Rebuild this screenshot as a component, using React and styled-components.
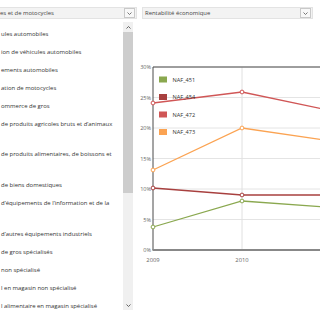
import React from 'react';
import styled, { createGlobalStyle } from 'styled-components';

const GlobalStyle = createGlobalStyle`
  html, body {
    margin: 0;
    padding: 0;
    background: #fff;
  }
  body {
    font-family: "Open Sans", "Liberation Sans", sans-serif;
    color: #333;
  }
`;

const Page = styled.div`
  width: 320px;
  height: 320px;
  overflow: hidden;
  display: flex;
  flex-direction: column;
`;

const Toolbar = styled.div`
  height: 22px;
  box-sizing: border-box;
  padding-top: 7px;
  display: flex;
  align-items: flex-start;
  gap: 5px;
`;

const Select = styled.div`
  width: ${p => p.$width}px;
  height: 12px;
  box-sizing: border-box;
  display: flex;
  align-items: center;
  background: #f3f3f3;
  border: 1px solid #e3e3e3;
  border-left: ${p => (p.$cut ? 'none' : '1px solid #e3e3e3')};
  padding-left: ${p => (p.$cut ? 0 : 2)}px;
  font-size: 5.9px;
  color: #444;
  white-space: nowrap;
`;

const SelectButton = styled.div`
  margin-left: auto;
  margin-right: 1px;
  width: 11px;
  height: 10px;
  box-sizing: border-box;
  border: 1px solid #c9c9c9;
  background: #f8f8f8;
  display: flex;
  align-items: center;
  justify-content: center;
`;

const Body = styled.div`
  height: 288px;
  display: flex;
`;

const ListPanel = styled.div`
  width: 133px;
  display: flex;
  background: #fff;
`;

const List = styled.div`
  flex: 1;
  overflow: hidden;
  padding-top: 3.5px;
`;

const Item = styled.div`
  padding: 2.6px 0 2.6px 1px;
  line-height: 12.75px;
  height: ${p => p.$lines * 12.75}px;
  font-size: 5.95px;
  color: #333;
  white-space: nowrap;
`;

const Scrollbar = styled.div`
  width: 10px;
  background: #f0f0f0;
  display: flex;
  flex-direction: column;
`;

const Arrow = styled.div`
  height: 10px;
  display: flex;
  align-items: center;
  justify-content: center;
`;

const Track = styled.div`
  flex: 1;
`;

const Thumb = styled.div`
  height: 161px;
  background: #cdcdcd;
`;

const ChartPanel = styled.div`
  flex: 1;
  margin-left: 3px;
  background: #fff;
`;

const Chevron = ({ up, color = '#666' }) => (
  <svg width="5" height="3" viewBox="0 0 5 3">
    <polyline
      points={up ? '0.5,2.5 2.5,0.5 4.5,2.5' : '0.5,0.5 2.5,2.5 4.5,0.5'}
      fill="none"
      stroke={color}
      strokeWidth="0.9"
    />
  </svg>
);

const items = [
  { text: 'ules automobiles', lines: 1 },
  { text: 'ion de véhicules automobiles', lines: 1 },
  { text: 'ements automobiles', lines: 1 },
  { text: 'ation de motocycles', lines: 1 },
  { text: 'ommerce de gros', lines: 1 },
  { text: 'de produits agricoles bruts et d\u2019animaux', lines: 2 },
  { text: 'de produits alimentaires, de boissons et', lines: 2 },
  { text: 'de biens domestiques', lines: 1 },
  { text: 'd\u2019équipements de l\u2019information et de la', lines: 2 },
  { text: 'd\u2019autres équipements industriels', lines: 1 },
  { text: 'de gros spécialisés', lines: 1 },
  { text: 'non spécialisé', lines: 1 },
  { text: 'l en magasin non spécialisé', lines: 1 },
  { text: 'l alimentaire en magasin spécialisé', lines: 1 },
];

// chart geometry in page coordinates
const TOP = 67;
const BOTTOM = 250;
const LEFT = 153;
const STEP = 89;
const yOf = v => BOTTOM - (v / 30) * (BOTTOM - TOP);

const series = [
  { name: 'NAF_451', color: '#8aa84f', ys: [227, 201, 207.5] },
  { name: 'NAF_454', color: '#a8403f', ys: [188, 195, 195] },
  { name: 'NAF_472', color: '#d05656', ys: [103, 92, 110.6] },
  { name: 'NAF_473', color: '#fba352', ys: [170, 128, 141] },
];

const Chart = () => {
  const ticks = [0, 5, 10, 15, 20, 25, 30];
  return (
    <svg width="184" height="288" viewBox="136 22 184 288" style={{ display: 'block' }}>
      {ticks.map(t => (
        <line key={t} x1={LEFT} x2={340} y1={yOf(t)} y2={yOf(t)} stroke="#e4e4e4" strokeWidth="1" />
      ))}
      <line x1={LEFT + STEP} x2={LEFT + STEP} y1={TOP} y2={BOTTOM} stroke="#e0e0e0" strokeWidth="1" />
      {ticks.map(t => (
        <text
          key={t}
          x={151}
          y={yOf(t) + 2}
          textAnchor="end"
          fontSize="5.5"
          fill="#666"
          fontFamily="Open Sans, Liberation Sans, sans-serif"
        >
          {t}%
        </text>
      ))}
      {['2009', '2010'].map((yr, i) => (
        <text
          key={yr}
          x={LEFT + i * STEP}
          y={262}
          textAnchor="middle"
          fontSize="5.8"
          fill="#666"
          fontFamily="Open Sans, Liberation Sans, sans-serif"
        >
          {yr}
        </text>
      ))}
      {series.map(s => (
        <polyline
          key={s.name}
          points={s.ys.map((y, i) => `${LEFT + i * STEP},${y}`).join(' ')}
          fill="none"
          stroke={s.color}
          strokeWidth="1.3"
        />
      ))}
      <line x1={LEFT} x2={340} y1={TOP} y2={TOP} stroke="#4a4a4a" strokeWidth="1" />
      <line x1={LEFT} x2={LEFT} y1={TOP} y2={BOTTOM} stroke="#4a4a4a" strokeWidth="1" />
      <line x1={LEFT - 0.5} x2={340} y1={BOTTOM} y2={BOTTOM} stroke="#888" strokeWidth="2" />
      {series.map(s =>
        s.ys.map((y, i) => (
          <circle
            key={s.name + i}
            cx={LEFT + i * STEP}
            cy={y}
            r="1.9"
            fill="#fff"
            stroke={s.color}
            strokeWidth="1"
          />
        ))
      )}
      {series.map((s, i) => (
        <g key={s.name}>
          <rect x={159} y={76.5 + i * 17.5} width={8} height={6} fill={s.color} />
          <text
            x={172.5}
            y={81.5 + i * 17.5}
            fontSize="5.6"
            fill="#333"
            fontFamily="Open Sans, Liberation Sans, sans-serif"
          >
            {s.name}
          </text>
        </g>
      ))}
    </svg>
  );
};

export default function App() {
  return (
    <Page>
      <GlobalStyle />
      <Toolbar>
        <Select $width={137} $cut>
          es et de motocycles
          <SelectButton>
            <Chevron />
          </SelectButton>
        </Select>
        <Select $width={171}>
          Rentabilité économique
          <SelectButton>
            <Chevron />
          </SelectButton>
        </Select>
      </Toolbar>
      <Body>
        <ListPanel>
          <List>
            {items.map(it => (
              <Item key={it.text} $lines={it.lines}>
                {it.text}
              </Item>
            ))}
          </List>
          <Scrollbar>
            <Arrow>
              <Chevron up color="#555" />
            </Arrow>
            <Track>
              <Thumb />
            </Track>
            <Arrow>
              <Chevron color="#555" />
            </Arrow>
          </Scrollbar>
        </ListPanel>
        <ChartPanel>
          <Chart />
        </ChartPanel>
      </Body>
    </Page>
  );
}
